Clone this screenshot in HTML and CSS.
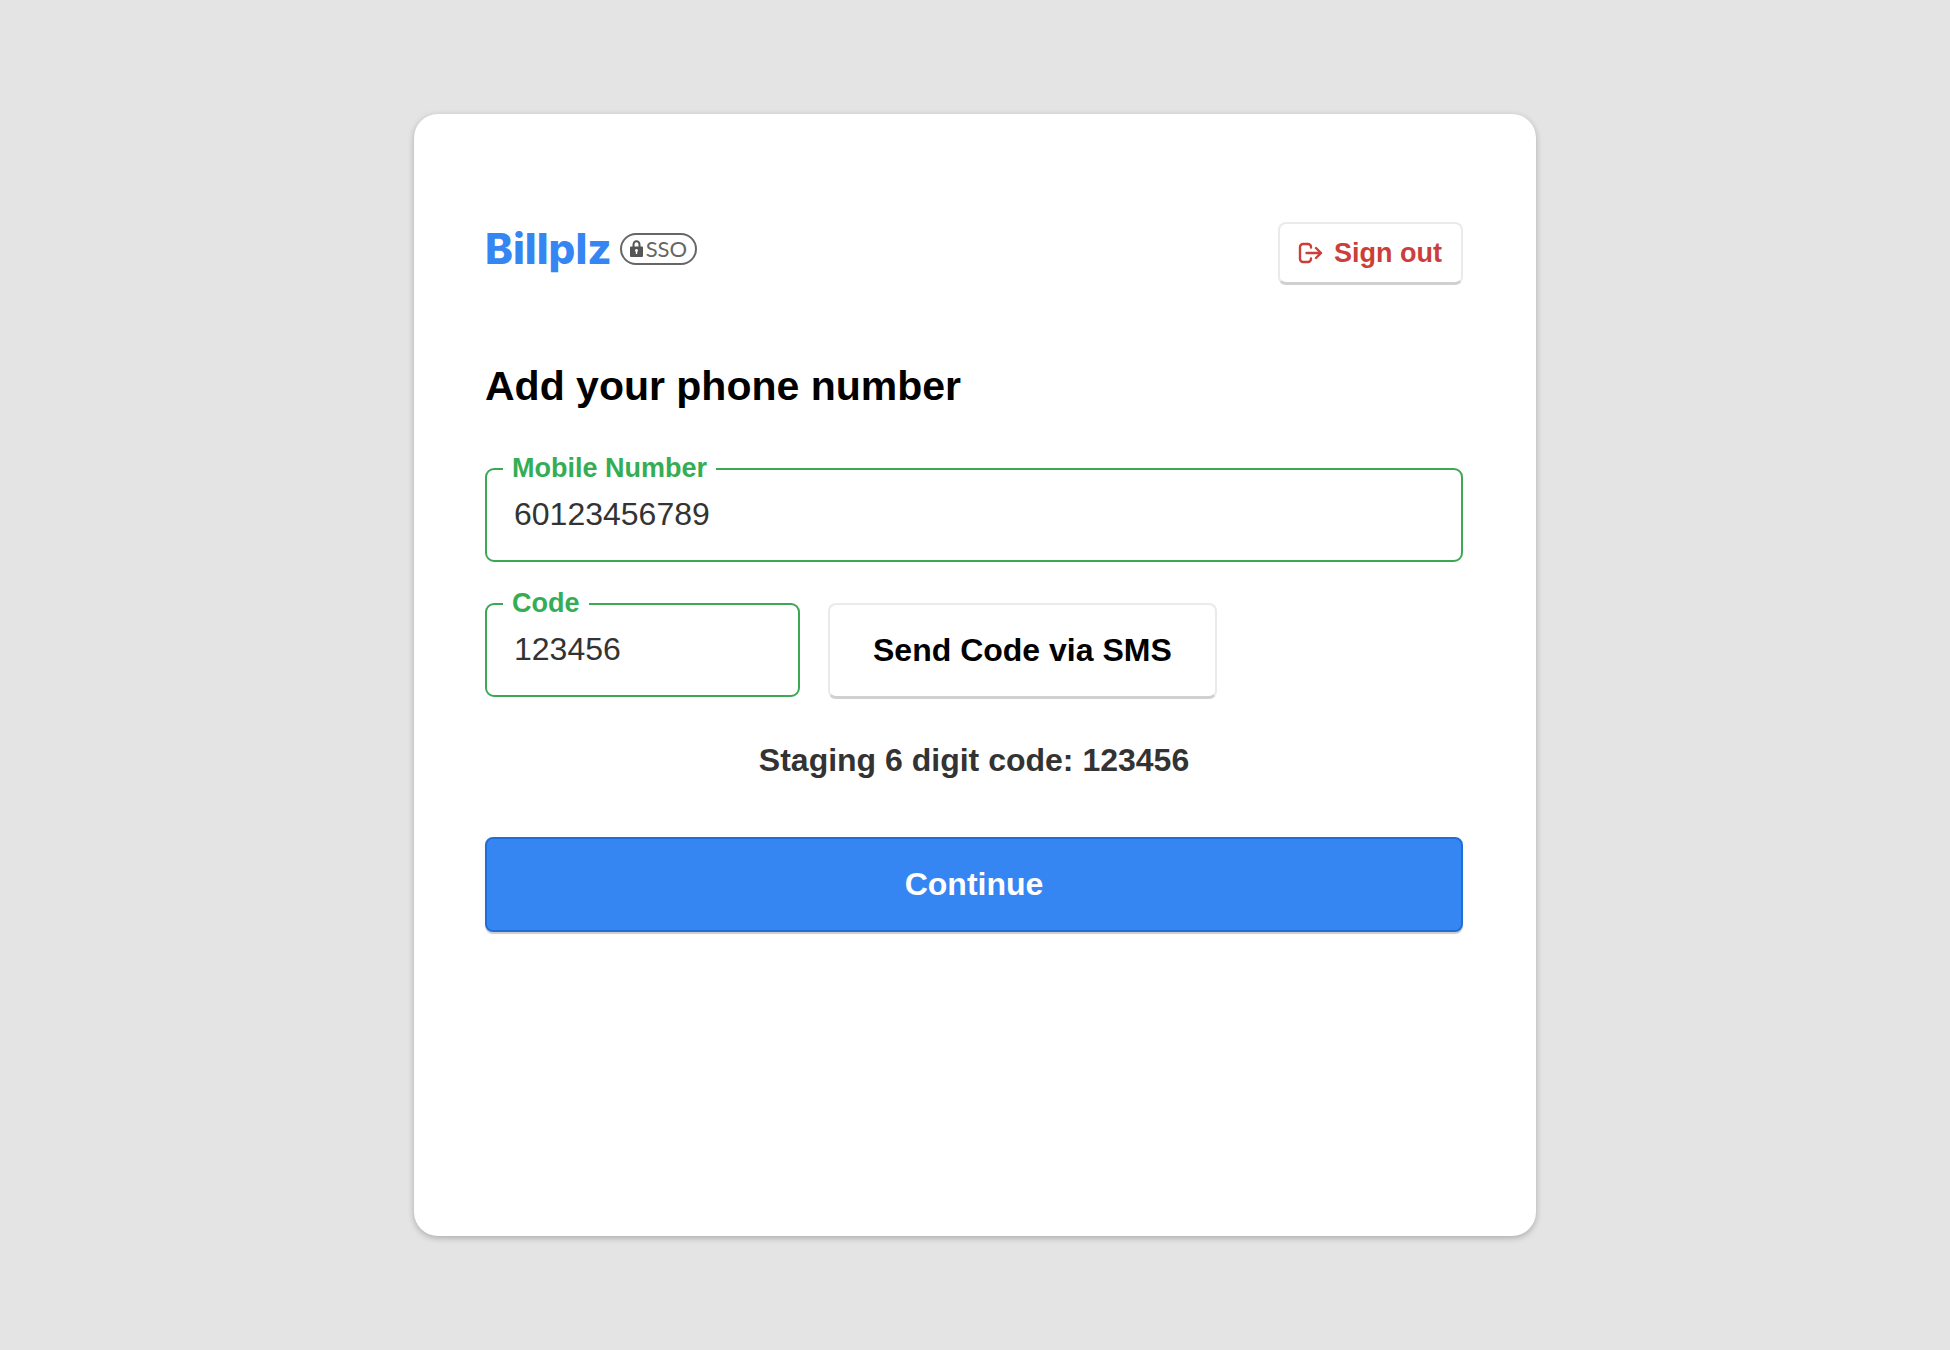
FILE: index.html
```html
<!DOCTYPE html>
<html lang="en">

<head>
    <meta charset="UTF-8">
    <meta name="viewport" content="width=device-width, initial-scale=1.0">
    <title>Billplz SSO</title>
    <link rel="stylesheet" href="styles.css">
</head>

<body>
    <main class="card">
        <header class="header">
            <a class="logo" href="#">
                <span class="logo-name">Billplz</span>
                <span class="logo-badge">
                    <svg class="lock-icon" viewBox="0 0 13 17" aria-hidden="true">
                        <path d="M3.500 7V4.500a3 3.300 0 0 1 6 0V7" fill="none" stroke="#555" stroke-width="2" />
                        <path d="M1 6.500h11a1 1 0 0 1 1 1V16a1 1 0 0 1-1 1H1a1 1 0 0 1-1-1V7.500a1 1 0 0 1 1-1z" fill="#555" />
                        <path d="M6.500 9a1.500 1.500 0 0 1 .7 2.800V14H5.800v-2.200A1.500 1.500 0 0 1 6.500 9z" fill="#fff" />
                    </svg>
                    SSO
                </span>
            </a>
            <button type="button" class="btn signout-btn">
                <svg class="signout-icon" viewBox="0 0 24 20" aria-hidden="true">
                    <path d="M12 4.500V4a3 3 0 0 0-3-3H4a3 3 0 0 0-3 3v12a3 3 0 0 0 3 3h5a3 3 0 0 0 3-3v-.5M7.500 10H22M17 5l5 5-5 5" />
                </svg>
                Sign out
            </button>
        </header>

        <h1>Add your phone number</h1>

        <form>
            <fieldset class="field">
                <legend><label for="mobile">Mobile Number</label></legend>
                <input type="tel" id="mobile" value="60123456789">
            </fieldset>

            <div class="code-row">
                <fieldset class="field code-field">
                    <legend><label for="code">Code</label></legend>
                    <input type="text" id="code" inputmode="numeric" value="123456">
                </fieldset>
                <button type="button" class="btn send-btn">Send Code via SMS</button>
            </div>

            <p class="hint">Staging 6 digit code: 123456</p>

            <button type="submit" class="btn continue-btn">Continue</button>
        </form>
    </main>
</body>

</html>
```
FILE: styles.css
```css
* {
    box-sizing: border-box;
}

body {
    font-family: "Liberation Sans", Arial, sans-serif;
    font-size: 32px;
    background-color: #e4e4e4;
    color: #333;
    margin: 0;
    min-height: 100vh;
    display: flex;
    align-items: center;
    justify-content: center;
}

.card {
    width: 100%;
    max-width: 1122px;
    padding: 108px 73px 304px 71px;
    background-color: #fff;
    border-radius: 24px;
    box-shadow: 0 2px 6px rgba(0, 0, 0, 0.25);
}

.header {
    display: flex;
    justify-content: space-between;
    align-items: flex-start;
}

.logo {
    display: flex;
    align-items: center;
    gap: 8px;
    height: 53px;
    text-decoration: none;
}

.logo-name {
    font-family: Inter, sans-serif;
    font-size: 42px;
    font-weight: 800;
    line-height: 52px;
    color: #3586f3;
}

.logo-badge {
    display: flex;
    align-items: center;
    gap: 3px;
    height: 32px;
    padding: 0 8px;
    border: 2px solid #666;
    border-radius: 16px;
    font-family: Lato, sans-serif;
    font-size: 22px;
    font-weight: 400;
    color: #666;
}

.lock-icon {
    width: 13px;
    height: 17px;
}

.btn {
    font-family: inherit;
    font-size: 32px;
    font-weight: bold;
    color: #000;
    background-color: #fff;
    border: 2px solid #eaeaea;
    border-bottom: 3px solid #d0d0d0;
    border-radius: 8px;
    cursor: pointer;
}

.signout-btn {
    display: flex;
    align-items: center;
    gap: 11px;
    height: 63px;
    padding: 0 19px;
    font-size: 27px;
    color: #cb3e3a;
}

.signout-icon {
    width: 24px;
    height: 20px;
    fill: none;
    stroke: #cb3e3a;
    stroke-width: 2.4;
    stroke-linecap: round;
    stroke-linejoin: round;
    overflow: visible;
}

h1 {
    margin: 77px 0 44px;
    font-size: 41px;
    line-height: 48px;
    color: #000;
}

.field {
    min-width: 0;
    margin: 0;
    padding: 0 16px 16px;
    border: 2px solid #3da755;
    border-radius: 9px;
}

.field legend {
    padding: 0 9px 2px;
    font-size: 27px;
    font-weight: bold;
    line-height: 28px;
    color: #35ad55;
}

.field input {
    display: block;
    width: 100%;
    height: 60px;
    padding: 0 11px;
    border: none;
    outline: none;
    background: none;
    font-family: inherit;
    font-size: 32px;
    color: #333;
}

.code-row {
    display: flex;
    align-items: flex-end;
    gap: 28px;
    margin-top: 27px;
}

.code-field {
    width: 315px;
    margin-bottom: 2px;
}

.send-btn {
    height: 96px;
    padding: 0 43px;
}

.hint {
    margin: 41px 0 57px;
    line-height: 40px;
    font-weight: bold;
    text-align: center;
}

.continue-btn {
    width: 100%;
    height: 95px;
    color: #fff;
    background-color: #3586f3;
    border: 2px solid #1f6fd6;
    box-shadow: 0 2px 1px rgba(0, 0, 0, 0.2);
}
```
